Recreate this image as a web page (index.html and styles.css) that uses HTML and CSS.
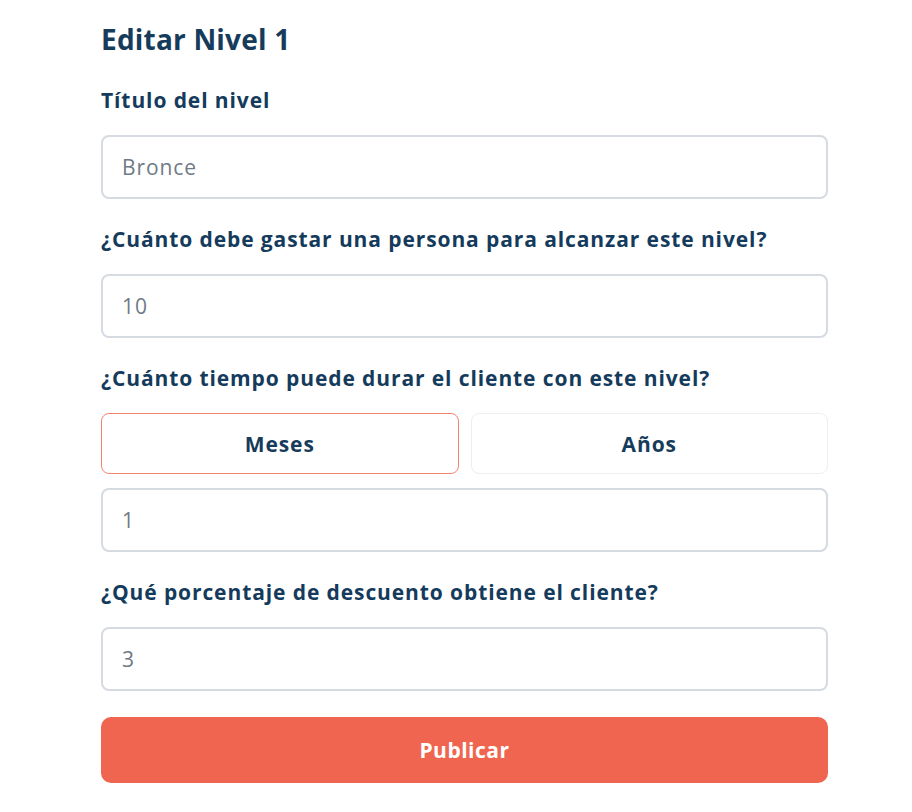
FILE: index.html
```html
<!DOCTYPE html>
<html lang="es">
<head>
<meta charset="utf-8">
<title>Editar Nivel 1</title>
<link rel="stylesheet" href="styles.css">
</head>
<body>
<form class="form">
  <h1 class="title">Editar Nivel 1</h1>

  <label class="label">Título del nivel</label>
  <div class="input">Bronce</div>

  <label class="label">¿Cuánto debe gastar una persona para alcanzar este nivel?</label>
  <div class="input">10</div>

  <label class="label">¿Cuánto tiempo puede durar el cliente con este nivel?</label>
  <div class="toggle">
    <div class="opt opt-active">Meses</div>
    <div class="opt">Años</div>
  </div>
  <div class="input">1</div>

  <label class="label">¿Qué porcentaje de descuento obtiene el cliente?</label>
  <div class="input">3</div>

  <div class="submit">Publicar</div>
</form>
</body>
</html>
```

FILE: styles.css
```css
* { box-sizing: border-box; }
html, body { margin: 0; background: #ffffff; }
body {
  font-family: "Open Sans", "Noto Sans", sans-serif;
  color: #153b5c;
}
.form {
  width: 727px;
  margin-left: 101px;
  padding-top: 22px;
  display: flex;
  flex-direction: column;
}
.title {
  margin: 0;
  font-size: 28px;
  line-height: 34px;
  font-weight: 700;
  letter-spacing: 0.2px;
  color: #163b5b;
}
.label {
  display: block;
  font-size: 21px;
  line-height: 24px;
  font-weight: 700;
  letter-spacing: 0.9px;
  margin-top: 28px;
  margin-bottom: 23px;
}
.title + .label { margin-top: 32px; }
.input {
  height: 64px;
  border: 2px solid #d6dae1;
  border-radius: 8px;
  padding: 0 19px;
  display: flex;
  align-items: center;
  font-size: 21px;
  letter-spacing: 0.9px;
  color: #6f7a86;
}
.toggle {
  display: grid;
  grid-template-columns: 1fr 1fr;
  gap: 12px;
  margin-bottom: 14px;
}
.opt {
  height: 61px;
  border: 1px solid #eeeeee;
  border-radius: 8px;
  display: flex;
  align-items: center;
  justify-content: center;
  font-size: 21px;
  font-weight: 700;
  letter-spacing: 0.9px;
  color: #163b5b;
}
.opt-active { border-color: #f1846f; }
.submit {
  margin-top: 26px;
  height: 66px;
  border-radius: 10px;
  background: #f06550;
  color: #ffffff;
  font-size: 21px;
  font-weight: 700;
  letter-spacing: 0.5px;
  display: flex;
  align-items: center;
  justify-content: center;
}
```
